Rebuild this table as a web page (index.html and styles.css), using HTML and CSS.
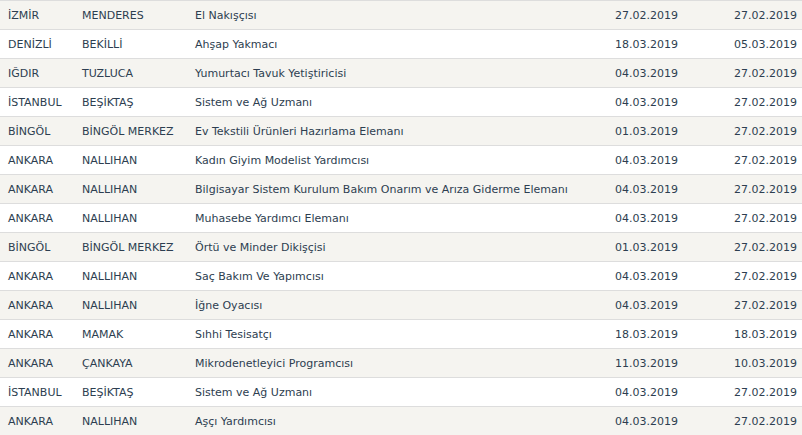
FILE: index.html
```html
<!DOCTYPE html>
<html lang="tr">
<head>
<meta charset="UTF-8">
<meta name="viewport" content="width=device-width, initial-scale=1.0">
<title>İlanlar</title>
<link rel="stylesheet" href="styles.css">
</head>
<body>
<table class="list">
    <colgroup>
        <col class="c-il">
        <col class="c-ilce">
        <col class="c-meslek">
        <col class="c-tarih1">
        <col class="c-tarih2">
    </colgroup>
    <tbody>
        <tr><td>İZMİR</td><td>MENDERES</td><td>El Nakışçısı</td><td class="date">27.02.2019</td><td class="date last">27.02.2019</td></tr>
        <tr><td>DENİZLİ</td><td>BEKİLLİ</td><td>Ahşap Yakmacı</td><td class="date">18.03.2019</td><td class="date last">05.03.2019</td></tr>
        <tr><td>IĞDIR</td><td>TUZLUCA</td><td>Yumurtacı Tavuk Yetiştiricisi</td><td class="date">04.03.2019</td><td class="date last">27.02.2019</td></tr>
        <tr><td>İSTANBUL</td><td>BEŞİKTAŞ</td><td>Sistem ve Ağ Uzmanı</td><td class="date">04.03.2019</td><td class="date last">27.02.2019</td></tr>
        <tr><td>BİNGÖL</td><td>BİNGÖL MERKEZ</td><td>Ev Tekstili Ürünleri Hazırlama Elemanı</td><td class="date">01.03.2019</td><td class="date last">27.02.2019</td></tr>
        <tr><td>ANKARA</td><td>NALLIHAN</td><td>Kadın Giyim Modelist Yardımcısı</td><td class="date">04.03.2019</td><td class="date last">27.02.2019</td></tr>
        <tr><td>ANKARA</td><td>NALLIHAN</td><td>Bilgisayar Sistem Kurulum Bakım Onarım ve Arıza Giderme Elemanı</td><td class="date">04.03.2019</td><td class="date last">27.02.2019</td></tr>
        <tr><td>ANKARA</td><td>NALLIHAN</td><td>Muhasebe Yardımcı Elemanı</td><td class="date">04.03.2019</td><td class="date last">27.02.2019</td></tr>
        <tr><td>BİNGÖL</td><td>BİNGÖL MERKEZ</td><td>Örtü ve Minder Dikişçisi</td><td class="date">01.03.2019</td><td class="date last">27.02.2019</td></tr>
        <tr><td>ANKARA</td><td>NALLIHAN</td><td>Saç Bakım Ve Yapımcısı</td><td class="date">04.03.2019</td><td class="date last">27.02.2019</td></tr>
        <tr><td>ANKARA</td><td>NALLIHAN</td><td>İğne Oyacısı</td><td class="date">04.03.2019</td><td class="date last">27.02.2019</td></tr>
        <tr><td>ANKARA</td><td>MAMAK</td><td>Sıhhi Tesisatçı</td><td class="date">18.03.2019</td><td class="date last">18.03.2019</td></tr>
        <tr><td>ANKARA</td><td>ÇANKAYA</td><td>Mikrodenetleyici Programcısı</td><td class="date">11.03.2019</td><td class="date last">10.03.2019</td></tr>
        <tr><td>İSTANBUL</td><td>BEŞİKTAŞ</td><td>Sistem ve Ağ Uzmanı</td><td class="date">04.03.2019</td><td class="date last">27.02.2019</td></tr>
        <tr><td>ANKARA</td><td>NALLIHAN</td><td>Aşçı Yardımcısı</td><td class="date">04.03.2019</td><td class="date last">27.02.2019</td></tr>
    </tbody>
</table>
</body>
</html>
```

FILE: styles.css
```css
body {
    margin: 0;
    background-color: #fff;
    font-family: "DejaVu Sans", Verdana, sans-serif;
    font-size: 11px;
    color: #2d3e50;
}
.list {
    width: 802px;
    border-collapse: collapse;
    table-layout: fixed;
}
.c-il { width: 74px; }
.c-ilce { width: 113px; }
.c-tarih1 { width: 120px; }
.c-tarih2 { width: 116px; }
.list td {
    height: 28px;
    padding: 0 8px;
    border-top: 1px solid #dddddd;
    white-space: nowrap;
    vertical-align: middle;
    line-height: 13px;
}
.list tr:nth-child(odd) td {
    background-color: #f5f4f0;
}
.list td.date {
    text-align: right;
}
.list td.last {
    padding-right: 5px;
}
```
